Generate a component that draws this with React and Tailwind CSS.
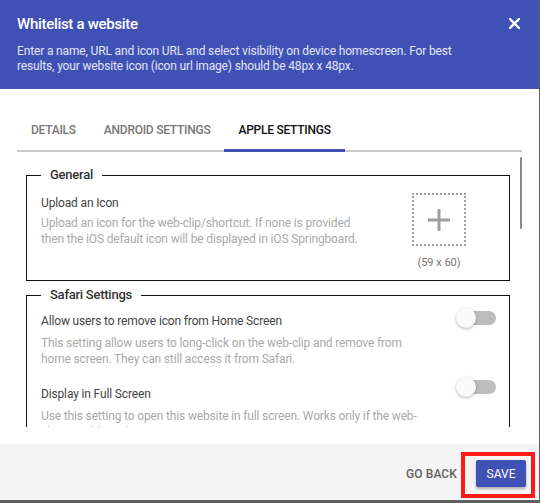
import React, { useState } from "react";

function Toggle({ on, onChange, className }) {
  return (
    <button
      type="button"
      onClick={onChange}
      className={"relative w-[40px] h-[20px] shrink-0 " + className}
    >
      <span
        className={
          "absolute left-[6px] top-[3px] w-[34px] h-[14px] rounded-full " +
          (on ? "bg-[#9fa8da]" : "bg-[#bdbdbd]")
        }
      />
      <span
        className={
          "absolute top-0 w-[20px] h-[20px] rounded-full shadow-[0_1px_3px_rgba(0,0,0,0.3)] " +
          (on ? "left-[20px] bg-[#3f51b5]" : "left-0 bg-[#fafafa]")
        }
      />
    </button>
  );
}

function Legend({ children }) {
  return (
    <legend className="px-[9px] text-[13px] leading-[16px] font-medium tracking-[-0.25px] text-[#333]">
      {children}
    </legend>
  );
}

export default function App() {
  const [tab, setTab] = useState("apple");
  const [removable, setRemovable] = useState(false);
  const [fullScreen, setFullScreen] = useState(false);

  const tabs = [
    { id: "details", label: "Details" },
    { id: "android", label: "Android Settings" },
    { id: "apple", label: "Apple Settings" },
  ];

  return (
    <div className="w-[540px] h-[503px] bg-[#5f5f5f] font-['Roboto','Liberation_Sans',sans-serif]">
      <div className="w-[539px] h-[500px] bg-white flex flex-col">
        {/* header */}
        <div className="bg-[#3f51b5] h-[89px] pt-[14px] pl-[17px] pr-[18px] text-white">
          <div className="flex items-start justify-between">
            <h2 className="text-[15px] leading-[20px] font-medium tracking-[-0.3px]">Whitelist a website</h2>
            <button type="button" className="mt-[4px] mr-[1px]">
              <svg width="11" height="11" viewBox="0 0 11 11">
                <path d="M1 1L10 10M10 1L1 10" stroke="white" strokeWidth="2.4" strokeLinecap="square" />
              </svg>
            </button>
          </div>
          <p className="mt-[10px] whitespace-nowrap text-[12px] leading-[14.5px] tracking-[-0.15px] text-white/85">
            Enter a name, URL and icon URL and select visibility on device homescreen. For best
            <br />
            results, your website icon (icon url image) should be 48px x 48px.
          </p>
        </div>

        {/* tabs */}
        <div className="pt-[22px]">
          <div className="mx-[17px] flex border-b-2 border-[#cccccc]">
            {tabs.map((t) => (
              <button
                key={t.id}
                type="button"
                onClick={() => setTab(t.id)}
                className={
                  "h-[41px] -mb-[2px] px-[14px] border-b-[3px] text-[12px] font-medium uppercase tracking-[-0.25px] " +
                  (tab === t.id ? "border-[#3f51b5] text-[#111]" : "border-transparent text-[#777]")
                }
              >
                {t.label}
              </button>
            ))}
          </div>
        </div>

        {/* content */}
        <div className="relative h-[275px] overflow-hidden pt-[15px] pl-[26px] text-[12px] leading-[16px] tracking-[-0.15px]">
          <div className="absolute right-[17px] top-[5px] w-[2.5px] h-[72px] rounded bg-[#8a8a8a]" />

          <fieldset className="w-[484px] border border-[#111] pl-[14px] pb-[10px]">
            <Legend>General</Legend>
            <div className="flex pt-[10px]">
              <div className="w-[325px] mt-[2px]">
                <div className="text-[#444]">Upload an Icon</div>
                <div className="mt-[4px] text-[#aaaaaa]">
                  Upload an icon for the web-clip/shortcut. If none is provided then the iOS default
                  icon will be displayed in iOS Springboard.
                </div>
              </div>
              <div className="ml-[46px] flex flex-col items-center">
                <button
                  type="button"
                  className="w-[54px] h-[53px] border-2 border-dotted border-[#9e9e9e] flex items-center justify-center"
                >
                  <svg width="22" height="22" viewBox="0 0 22 22">
                    <path d="M11 0V22M0 11H22" stroke="#9e9e9e" strokeWidth="3" />
                  </svg>
                </button>
                <div className="mt-[10px] text-[11px] leading-[14px] tracking-normal text-[#757575]">(59 x 60)</div>
              </div>
            </div>
          </fieldset>

          <fieldset className="mt-[6px] w-[484px] border border-[#111] pl-[14px] pb-[10px]">
            <Legend>Safari Settings</Legend>
            <div className="pt-[10px]">
              <div className="flex items-start">
                <div className="w-[382px]">
                  <div className="text-[#444]">Allow users to remove icon from Home Screen</div>
                  <div className="mt-[6px] text-[#aaaaaa]">
                    This setting allow users to long-click on the web-clip and remove from home
                    screen. They can still access it from Safari.
                  </div>
                </div>
                <Toggle
                  on={removable}
                  onChange={() => setRemovable(!removable)}
                  className="ml-[33px] -mt-[5px]"
                />
              </div>
              <div className="mt-[19px] flex items-start">
                <div className="w-[382px]">
                  <div className="text-[#444]">Display in Full Screen</div>
                  <div className="mt-[6px] text-[#aaaaaa]">
                    Use this setting to open this website in full screen. Works only if the web-clip
                    is visible on home screen.
                  </div>
                </div>
                <Toggle
                  on={fullScreen}
                  onChange={() => setFullScreen(!fullScreen)}
                  className="ml-[33px] -mt-[9px]"
                />
              </div>
            </div>
          </fieldset>
        </div>

        <div className="h-[17px]" />

        {/* footer */}
        <div className="h-[56px] bg-[#f5f5f5] flex justify-end items-start pt-[8px] pr-[4px]">
          <button
            type="button"
            className="mt-[8px] mr-[4px] h-[27px] text-[12px] font-medium uppercase tracking-[0.1px] text-[#616161]"
          >
            Go back
          </button>
          <div className="border-4 border-[#ff1a1a] pl-[11px] pr-[5px] pt-[4px] pb-[7px]">
            <button
              type="button"
              className="w-[50px] h-[27px] rounded-[2px] bg-[#3f51b5] text-white text-[12px] uppercase shadow-[0_2px_3px_rgba(0,0,0,0.3)]"
            >
              Save
            </button>
          </div>
        </div>
      </div>
    </div>
  );
}
